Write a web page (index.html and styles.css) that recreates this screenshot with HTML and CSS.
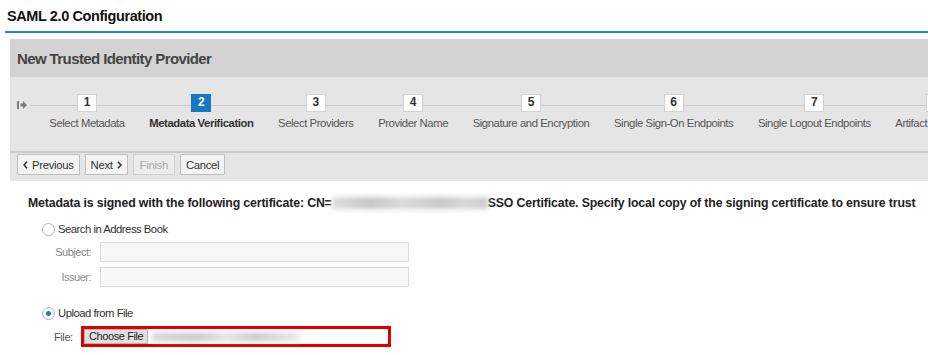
FILE: index.html
```html
<!DOCTYPE html>
<html>
<head>
<meta charset="utf-8">
<link rel="stylesheet" href="styles.css">
</head>
<body>
<div class="page-title">SAML 2.0 Configuration</div>
<div class="panel">
  <div class="panel-head">New Trusted Identity Provider</div>
  <div class="roadmap">
    <svg class="road-start" width="10" height="8" viewBox="0 0 10 8"><rect x="0" y="0" width="2" height="8" fill="#7d7d7d"/><path d="M3.5 2.6H6V0L10 4L6 8V5.4H3.5Z" fill="#7d7d7d"/></svg>
    <div class="steps">
      <div class="step"><span class="num">1</span><span class="lbl">Select Metadata</span></div>
      <div class="step active"><span class="num">2</span><span class="lbl">Metadata Verification</span></div>
      <div class="step"><span class="num">3</span><span class="lbl">Select Providers</span></div>
      <div class="step"><span class="num">4</span><span class="lbl">Provider Name</span></div>
      <div class="step"><span class="num">5</span><span class="lbl">Signature and Encryption</span></div>
      <div class="step"><span class="num">6</span><span class="lbl">Single Sign-On Endpoints</span></div>
      <div class="step"><span class="num">7</span><span class="lbl">Single Logout Endpoints</span></div>
      <div class="step"><span class="num">8</span><span class="lbl">Artifact Endpoints</span></div>
    </div>
  </div>
  <div class="toolbar">
    <button class="btn"><svg width="5" height="8" viewBox="0 0 5 8"><path d="M4 0.8L1 4L4 7.2" fill="none" stroke="#333" stroke-width="1.6"/></svg>Previous</button>
    <button class="btn">Next<svg width="5" height="8" viewBox="0 0 5 8"><path d="M1 0.8L4 4L1 7.2" fill="none" stroke="#333" stroke-width="1.6"/></svg></button>
    <button class="btn disabled">Finish</button>
    <button class="btn">Cancel</button>
  </div>
</div>
<div class="content">
  <div class="cert">Metadata is signed with the following certificate: CN=<span class="blur cn"></span>SSO Certificate. Specify local copy of the signing certificate to ensure trust</div>
  <div class="options">
    <div class="radio-row"><span class="radio"></span>Search in Address Book</div>
    <div class="field-row"><span class="field-label">Subject:</span><span class="input"></span></div>
    <div class="field-row second"><span class="field-label">Issuer:</span><span class="input"></span></div>
    <div class="radio-row upload"><span class="radio checked"></span>Upload from File</div>
    <div class="file-row"><span class="file-label">File:</span><span class="file-box"><span class="choose">Choose File</span><span class="blur fname"></span></span></div>
  </div>
</div>
</body>
</html>
```

FILE: styles.css
```css
body {
  margin: 0;
  background: #fff;
  font-family: "Liberation Sans", Arial, sans-serif;
  color: #333;
}
.page-title {
  margin-left: 5px;
  padding: 7px 0 5px 2px;
  height: 19px;
  font-size: 14.5px;
  font-weight: bold;
  letter-spacing: -0.4px;
  line-height: 19px;
  color: #111;
  border-bottom: 2px solid #1f86cb;
}
.panel {
  margin: 6px 0 0 10px;
  background: #e5e5e5;
}
.panel-head {
  height: 38px;
  display: flex;
  align-items: center;
  padding-left: 7px;
  background: #d3d3d3;
  font-size: 15px;
  font-weight: bold;
  letter-spacing: -0.6px;
  color: #444;
}
.roadmap {
  height: 74px;
  display: flex;
  align-items: flex-start;
  padding-left: 7px;
  overflow: hidden;
  background: linear-gradient(#c9c9c9, #c9c9c9) 20px 28px / 100% 1px no-repeat, #e5e5e5;
}
.road-start {
  flex: none;
  margin-top: 24px;
}
.steps {
  display: flex;
  margin-left: 10px;
}
.step {
  flex: none;
  display: flex;
  flex-direction: column;
  align-items: center;
  padding: 0 12.3px;
}
.num {
  margin-top: 17px;
  width: 20px;
  height: 18px;
  box-sizing: border-box;
  border: 1px solid #d2d2d2;
  background: #fff;
  font-size: 12px;
  font-weight: bold;
  line-height: 15px;
  text-align: center;
  color: #333;
}
.lbl {
  margin-top: 4px;
  font-size: 11.3px;
  letter-spacing: -0.42px;
  line-height: 15px;
  color: #555;
  white-space: nowrap;
}
.step.active .num {
  background: #1877c3;
  border-color: #1877c3;
  color: #fff;
}
.step.active .lbl {
  font-weight: bold;
  color: #333;
}
.toolbar {
  display: flex;
  gap: 5px;
  padding: 1px 7px 6px;
  border-top: 2px solid #c9c9c9;
}
.btn {
  height: 21px;
  display: flex;
  align-items: center;
  gap: 4px;
  padding: 0 5px;
  border: 1px solid #bdbdbd;
  border-radius: 1px;
  background: #f3f3f3;
  font-family: inherit;
  font-size: 11.3px;
  letter-spacing: -0.3px;
  color: #333;
}
.btn.disabled {
  padding: 0 6px;
  color: #aaa;
  border-color: #d0d0d0;
  background: #ececec;
}
.content {
  padding-left: 28px;
}
.cert {
  margin-top: 14px;
  font-size: 12.3px;
  font-weight: bold;
  letter-spacing: -0.14px;
  line-height: 16px;
  color: #222;
  white-space: nowrap;
}
.blur {
  display: inline-block;
  filter: blur(2.5px);
}
.cn {
  width: 156px;
  height: 12px;
  vertical-align: -2px;
  background: linear-gradient(90deg, #dedede, #c6c6c6 25%, #dadada 45%, #c8c8c8 70%, #d6d6d6 85%, #cccccc);
}
.options {
  margin-left: 14px;
}
.radio-row {
  display: flex;
  align-items: center;
  gap: 3px;
  margin-top: 10px;
  height: 16px;
  font-size: 11.3px;
  letter-spacing: -0.5px;
  color: #333;
}
.radio-row.upload {
  margin-top: 18px;
}
.radio {
  width: 13px;
  height: 13px;
  box-sizing: border-box;
  border: 1px solid #b5b5b5;
  border-radius: 50%;
  background: #fff;
  display: flex;
  align-items: center;
  justify-content: center;
}
.radio.checked::after {
  content: "";
  width: 5px;
  height: 5px;
  border-radius: 50%;
  background: #1a7cc6;
}
.field-row {
  display: flex;
  align-items: center;
  margin-top: 5px;
}
.field-label {
  width: 49px;
  text-align: right;
  margin-right: 9px;
  font-size: 11px;
  letter-spacing: -0.5px;
  color: #8a8a8a;
}
.input {
  width: 309px;
  height: 20px;
  box-sizing: border-box;
  border: 1px solid #dcdcdc;
  background: #f7f7f7;
}
.file-row {
  display: flex;
  align-items: center;
  margin-top: 5px;
  margin-left: 12px;
}
.file-label {
  width: 27px;
  font-size: 11px;
  letter-spacing: -0.4px;
  color: #555;
}
.file-box {
  width: 310px;
  height: 21px;
  box-sizing: border-box;
  border: 3px solid #e00000;
  display: flex;
  align-items: center;
}
.choose {
  height: 15px;
  box-sizing: border-box;
  padding: 0 4px;
  border: 1px solid #b3b3b3;
  background: #e0e0e0;
  font-size: 11px;
  letter-spacing: -0.4px;
  line-height: 13px;
  color: #222;
}
.fname {
  width: 148px;
  height: 8px;
  margin-left: 4px;
  background: linear-gradient(90deg, #d6d6d6, #c6c6c6 30%, #e2e2e2 50%, #c8c8c8 70%, #e8e8e8);
}
```
